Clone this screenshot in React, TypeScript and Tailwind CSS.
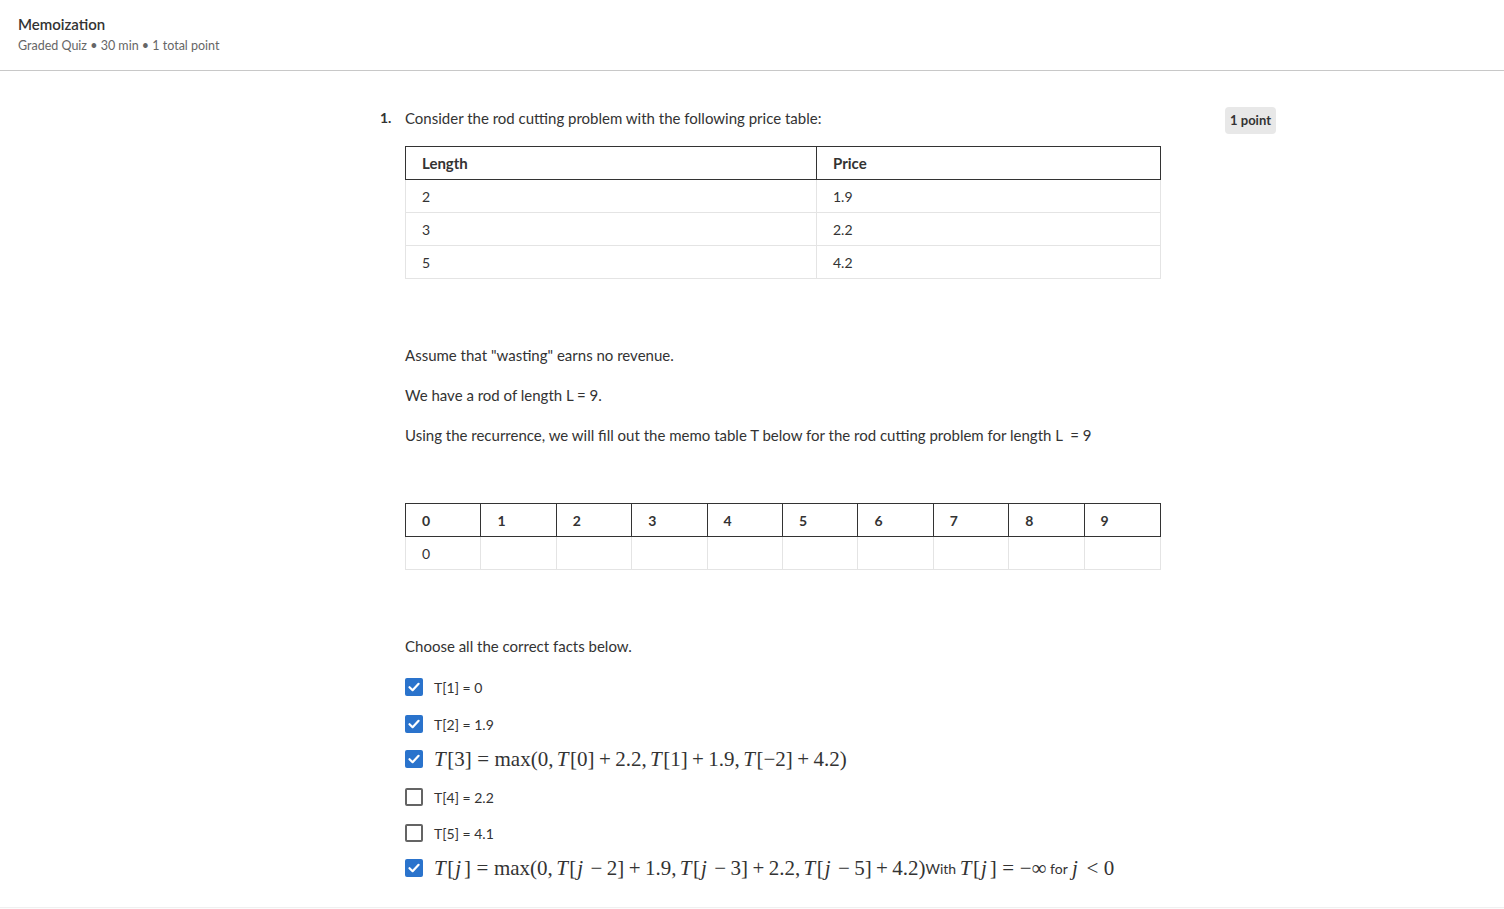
import React from "react";

const Rel = ({ c }: { c: string }) => <span className="mx-[5.5px]">{c}</span>;
const Bin = ({ c }: { c: string }) => <span className="mx-[4.4px]">{c}</span>;
const Cm = () => <span className="mr-[3.4px]">,</span>;
const I = ({ c }: { c: string }) => (
  <i className={c === "j" ? "ml-[1px] mr-[3px] italic" : "mr-[1.5px] italic"}>{c}</i>
);

const MathS = ({ children }: { children: React.ReactNode }) => (
  <span className="font-['Liberation_Serif',serif] text-[21px] leading-[24px] text-[#333] whitespace-nowrap">
    {children}
  </span>
);

const Check = ({ checked }: { checked: boolean }) =>
  checked ? (
    <span className="flex h-[18px] w-[18px] shrink-0 items-center justify-center rounded-[2px] bg-[#2a73cc]">
      <svg width="14" height="14" viewBox="0 0 14 14" fill="none">
        <path d="M2.5 7.2 L5.6 10.2 L11.6 3.8" stroke="white" strokeWidth="2.2" strokeLinecap="round" strokeLinejoin="round" />
      </svg>
    </span>
  ) : (
    <span className="h-[18px] w-[18px] shrink-0 rounded-[2px] border-2 border-[#646464] bg-white" />
  );

const Row = ({ checked, cls, children }: { checked: boolean; cls?: string; children: React.ReactNode }) => (
  <div className={`flex h-[36px] items-center gap-[11px] ${cls ?? ""}`}>
    <Check checked={checked} />
    <div className="flex items-center text-[14px] text-[#333]">{children}</div>
  </div>
);

export default function App() {
  const priceRows = [
    ["2", "1.9"],
    ["3", "2.2"],
    ["5", "4.2"],
  ];
  const cols = ["0", "1", "2", "3", "4", "5", "6", "7", "8", "9"];
  return (
    <div className="min-h-screen bg-white font-['Lato',sans-serif] text-[#333]">
      <header className="h-[71px] border-b border-[#c8c8c8] px-[18px] pt-[14px]">
        <div className="text-[15px] font-semibold leading-[20px] text-[#333]">Memoization</div>
        <div className="mt-[3px] text-[12.5px] leading-[18px] text-[#666]">
          Graded Quiz • 30 min • 1 total point
        </div>
      </header>

      <main className="pl-[380px] pt-[37px]">
        <div className="flex w-[896px]">
          <div className="w-[25px] text-[14px] font-bold leading-[20px] text-[#333]">1.</div>
          <div className="w-[756px]">
            <p className="text-[15px] leading-[20px]">Consider the rod cutting problem with the following price table:</p>

            <div className="mt-[18px] text-[14px]">
              <div className="flex h-[34px] items-center border border-[#333] text-[15px] font-bold">
                <div className="flex h-full w-[411px] items-center border-r border-[#333] px-[16px]">Length</div>
                <div className="flex h-full flex-1 items-center px-[16px]">Price</div>
              </div>
              {priceRows.map((r) => (
                <div key={r[0]} className="flex h-[33px] items-center border-x border-b border-[#e4e4e4]">
                  <div className="flex h-full w-[411px] items-center border-r border-[#e4e4e4] px-[16px]">{r[0]}</div>
                  <div className="flex h-full flex-1 items-center px-[16px]">{r[1]}</div>
                </div>
              ))}
            </div>

            <p className="mt-[66px] text-[15px] leading-[20px]">Assume that "wasting" earns no revenue.</p>
            <p className="mt-[20px] text-[15px] leading-[20px]">We have a rod of length L = 9.</p>
            <p className="mt-[20px] text-[15px] leading-[20px]">
              Using the recurrence, we will fill out the memo table T below for the rod cutting problem for length L &nbsp;= 9
            </p>

            <div className="mt-[58px] text-[14px]">
              <div className="grid h-[34px] grid-cols-10 border border-[#333] font-bold">
                {cols.map((c, i) => (
                  <div key={c} className={`flex items-center px-[16px] ${i < 9 ? "border-r border-[#333]" : ""}`}>
                    {c}
                  </div>
                ))}
              </div>
              <div className="grid h-[33px] grid-cols-10 border-x border-b border-[#e4e4e4]">
                {cols.map((c, i) => (
                  <div key={c} className={`flex items-center px-[16px] ${i < 9 ? "border-r border-[#e4e4e4]" : ""}`}>
                    {i === 0 ? "0" : ""}
                  </div>
                ))}
              </div>
            </div>

            <p className="mt-[66px] text-[15px] leading-[20px]">Choose all the correct facts below.</p>

            <div className="mt-[13px] flex flex-col">
              <Row checked>T[1] = 0</Row>
              <Row checked cls="mt-[1px]">T[2] = 1.9</Row>
              <Row checked cls="mt-[-1px]">
                <MathS>
                  <I c="T" />[3]<Rel c="=" />max(0<Cm /><I c="T" />[0]<Bin c="+" />2.2<Cm /><I c="T" />[1]<Bin c="+" />1.9<Cm /><I c="T" />[−2]<Bin c="+" />4.2)
                </MathS>
              </Row>
              <Row checked={false} cls="mt-[2px]">T[4] = 2.2</Row>
              <Row checked={false}>T[5] = 4.1</Row>
              <Row checked cls="mt-[-1px]">
                <MathS>
                  <I c="T" />[<I c="j" />]<Rel c="=" />max(0<Cm /><I c="T" />[<I c="j" /><Bin c="−" />2]<Bin c="+" />1.9<Cm /><I c="T" />[<I c="j" /><Bin c="−" />3]<Bin c="+" />2.2<Cm /><I c="T" />[<I c="j" /><Bin c="−" />5]<Bin c="+" />4.2)
                </MathS>
                <span>With&nbsp;</span>
                <MathS>
                  <I c="T" />[<I c="j" />]<Rel c="=" />−∞
                </MathS>
                <span>&nbsp;for&nbsp;</span>
                <MathS>
                  <I c="j" /><Rel c="<" />0
                </MathS>
              </Row>
            </div>
          </div>
          <div className="ml-auto mt-[-1px]">
            <div className="flex h-[27px] items-center rounded-[4px] bg-[#e8e8e8] px-[5px] text-[13px] font-bold text-[#333]">
              1 point
            </div>
          </div>
        </div>
      </main>

      <div className="mt-[21px] h-[4px] border-t border-[#f0f0f0] bg-[#fcfcfc]" />
    </div>
  );
}
